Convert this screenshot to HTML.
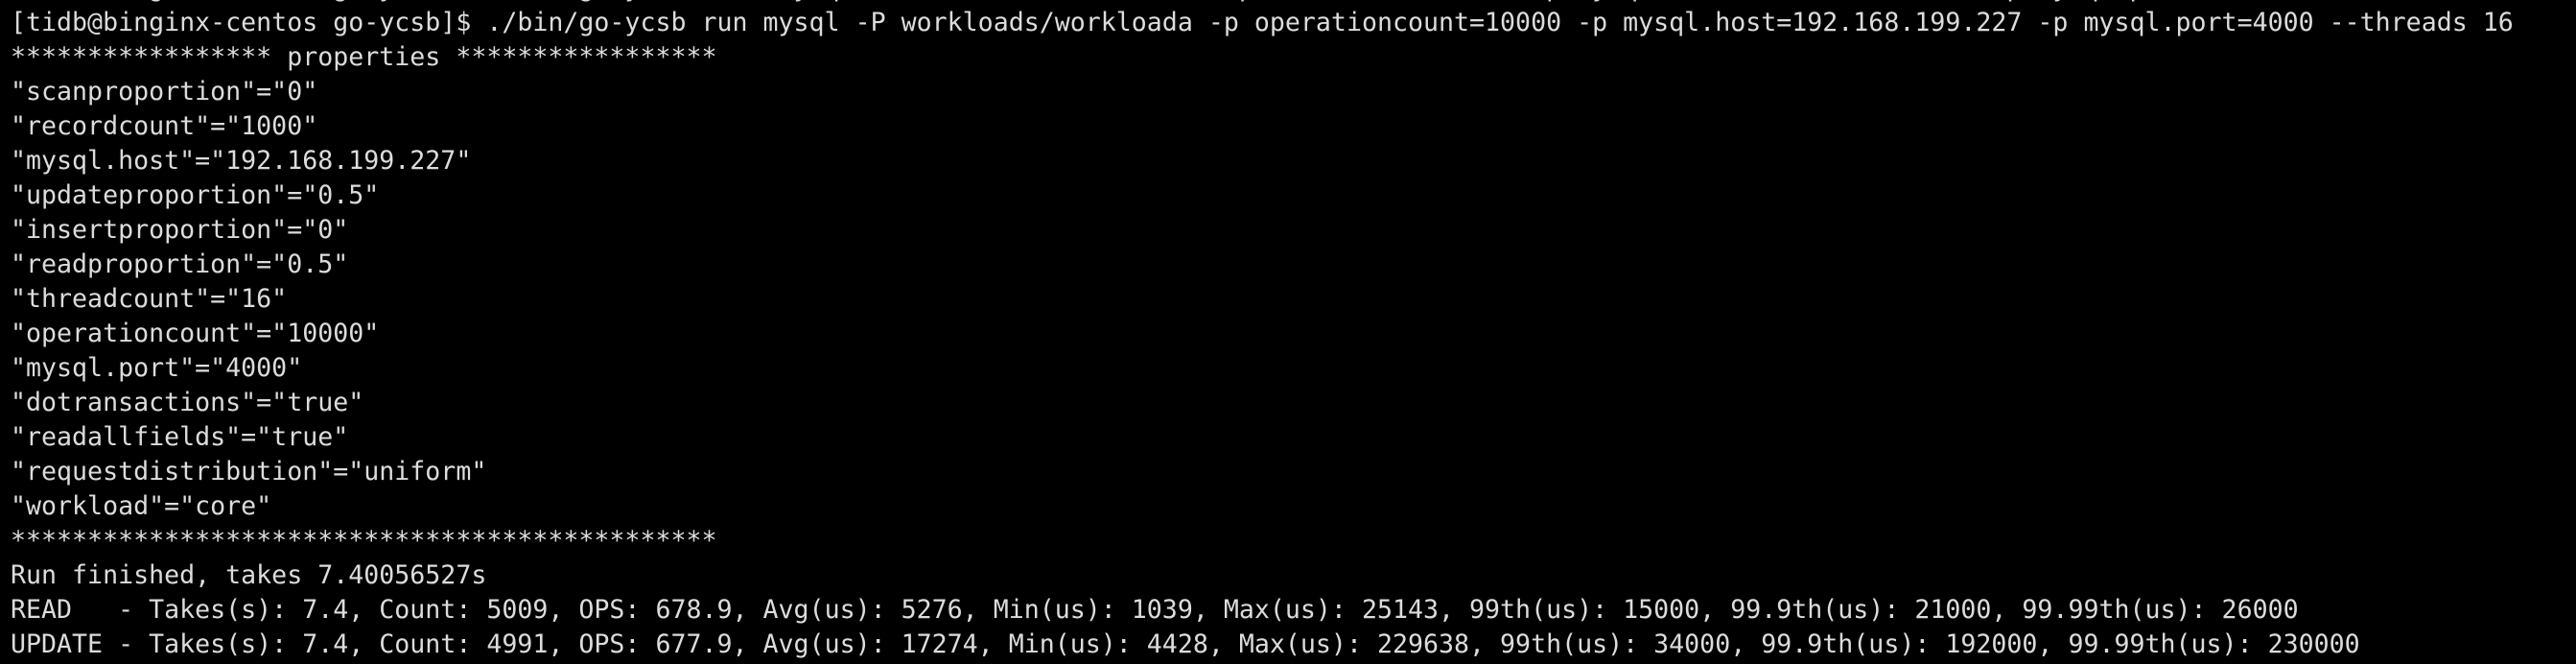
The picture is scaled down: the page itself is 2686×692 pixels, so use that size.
<!DOCTYPE html>
<html><head><meta charset="utf-8"><style>
html,body{margin:0;padding:0;background:#000;width:2686px;height:692px;overflow:hidden}
pre{position:absolute;left:11px;top:-30px;margin:0;font-family:"DejaVu Sans Mono","Liberation Mono",monospace;font-size:26.6px;line-height:36px;color:#dcdcdc;white-space:pre}
</style></head><body><pre>[tidb@binginx-centos go-ycsb]$ ./bin/go-ycsb load mysql -P workloads/workloada -p recordcount=1000 -p mysql.host=192.168.199.227 -p mysql.port=4000 --threads 16
[tidb@binginx-centos go-ycsb]$ ./bin/go-ycsb run mysql -P workloads/workloada -p operationcount=10000 -p mysql.host=192.168.199.227 -p mysql.port=4000 --threads 16
***************** properties *****************
"scanproportion"="0"
"recordcount"="1000"
"mysql.host"="192.168.199.227"
"updateproportion"="0.5"
"insertproportion"="0"
"readproportion"="0.5"
"threadcount"="16"
"operationcount"="10000"
"mysql.port"="4000"
"dotransactions"="true"
"readallfields"="true"
"requestdistribution"="uniform"
"workload"="core"
**********************************************
Run finished, takes 7.40056527s
READ   - Takes(s): 7.4, Count: 5009, OPS: 678.9, Avg(us): 5276, Min(us): 1039, Max(us): 25143, 99th(us): 15000, 99.9th(us): 21000, 99.99th(us): 26000
UPDATE - Takes(s): 7.4, Count: 4991, OPS: 677.9, Avg(us): 17274, Min(us): 4428, Max(us): 229638, 99th(us): 34000, 99.9th(us): 192000, 99.99th(us): 230000</pre></body></html>
